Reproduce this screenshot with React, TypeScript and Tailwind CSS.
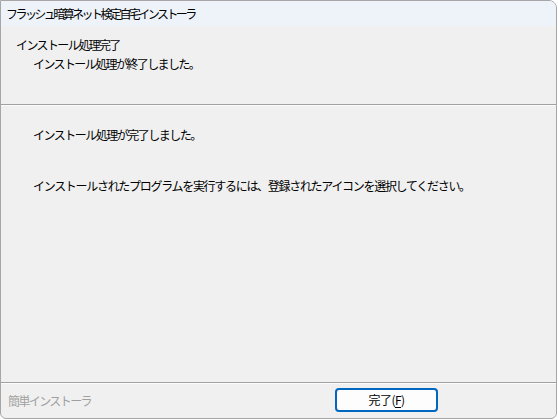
const font = {
  fontFamily: '"Noto Sans CJK JP", "Noto Sans", sans-serif',
};

export default function App() {
  return (
    <div className="h-[420px] w-[558px] bg-white" style={font}>
      <div className="flex h-[419px] w-[557px] flex-col overflow-hidden rounded-tr-[8px] rounded-bl-[6px] rounded-br-[6px] border border-[#a6a6a6] bg-[#f0f0f0] text-[12px] text-black">
        {/* title bar */}
        <div className="flex h-[25px] shrink-0 items-center bg-[#eef3fa] pl-[5px] tracking-[-2.55px]">
          フラッシュ暗算ネット検定自宅インストーラ
        </div>

        {/* header */}
        <div className="h-[78px] shrink-0 pt-[9px] pl-[15px] leading-[19px] tracking-[-1.6px]">
          <div>インストール処理完了</div>
          <div className="pl-[17px]">インストール処理が終了しました。</div>
        </div>
        <div className="h-px shrink-0 bg-[#a0a0a0]" />
        <div className="h-px shrink-0 bg-[#fcfcfc]" />

        {/* body */}
        <div className="flex-1 pt-[21px] pl-[32px] leading-[16px] tracking-[-1.5px]">
          <div>インストール処理が完了しました。</div>
          <div className="mt-[35px] tracking-[-1.3px]">
            インストールされたプログラムを実行するには、登録されたアイコンを選択してください。
          </div>
        </div>

        <div className="h-px shrink-0 bg-[#a0a0a0]" />
        <div className="h-px shrink-0 bg-[#fcfcfc]" />

        {/* footer */}
        <div className="flex h-[34px] shrink-0 items-center">
          <div className="w-[334px] shrink-0 pl-[7px] tracking-[-1.6px] text-[#a0a0a0]">
            簡単インストーラ
          </div>
          <button
            type="button"
            className="mb-[2px] flex h-[24px] w-[103px] items-center justify-center rounded-[4px] border-2 border-[#0067c0] bg-[#fdfdfd] text-[12px] tracking-[-0.5px]"
          >
            完了(<span className="underline underline-offset-2">F</span>)
          </button>
        </div>
      </div>
    </div>
  );
}
